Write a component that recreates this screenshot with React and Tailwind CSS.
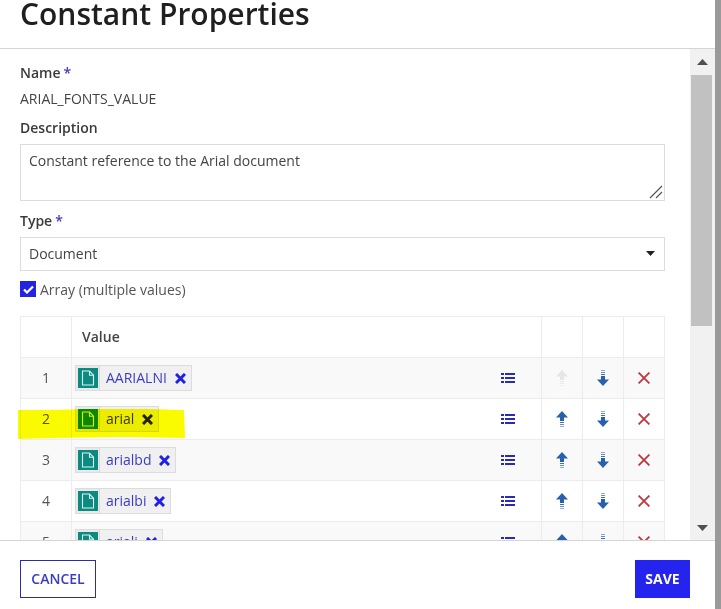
function DocIcon() {
  return (
    <span className="flex h-[24px] w-[24px] items-center justify-center border-r border-[#d8d8d8] bg-[#e9e9e9]">
      <span className="flex h-[20px] w-[20px] items-center justify-center bg-[#0a8a80]">
        <svg width="14" height="16" viewBox="0 0 14 16" fill="none" stroke="#dff5f2" strokeWidth="1.1">
          <path d="M1.5 1h7l4 4.2V15h-11z" />
          <path d="M8.5 1v4.2h4" />
        </svg>
      </span>
    </span>
  );
}

function BoldX({ size = 11, color = "#2222dd" }) {
  return (
    <svg width={size} height={size} viewBox="0 0 11 11" fill="none" stroke={color} strokeWidth="3">
      <path d="M1 1l9 9M10 1l-9 9" />
    </svg>
  );
}

function Chip({ label }) {
  return (
    <div className="flex h-[26px] w-fit items-center border border-[#dcdcdc] bg-[#f0f0f0]">
      <DocIcon />
      <span className="mb-[2px] ml-[6px] text-[14px] text-[#3c3cc4]">{label}</span>
      <span className="ml-[8px] mr-[5px] flex">
        <BoldX />
      </span>
    </div>
  );
}

function ListIcon() {
  return (
    <svg width="14" height="12" viewBox="0 0 14 12" fill="#2a2ab8">
      <rect x="0" y="1" width="3" height="2" />
      <rect x="4" y="1" width="10" height="2" />
      <rect x="0" y="5" width="3" height="2" />
      <rect x="4" y="5" width="10" height="2" />
      <rect x="0" y="9" width="3" height="2" />
      <rect x="4" y="9" width="10" height="2" />
    </svg>
  );
}

function UpArrow({ off }) {
  const c = off ? "#e6e6e6" : "#2860ac";
  return (
    <svg width="12" height="16" viewBox="0 0 12 16" fill={c}>
      <path d="M6 0l6 6.5H8V10H4V6.5H0z" />
      <rect x="4" y="11" width="4" height="1" opacity="0.9" />
      <rect x="4" y="13" width="4" height="1" opacity="0.7" />
      <rect x="4" y="15" width="4" height="1" opacity="0.5" />
    </svg>
  );
}

function DownArrow() {
  return (
    <svg width="12" height="16" viewBox="0 0 12 16" fill="#2860ac">
      <rect x="4" y="0" width="4" height="1" opacity="0.5" />
      <rect x="4" y="2" width="4" height="1" opacity="0.7" />
      <rect x="4" y="4" width="4" height="1" opacity="0.9" />
      <path d="M4 6h4v3.5h4L6 16 0 9.5h4z" />
    </svg>
  );
}

function RedX() {
  return (
    <svg width="12" height="12" viewBox="0 0 12 12" fill="none" stroke="#c0363c" strokeWidth="1.8">
      <path d="M0.6 0.6l10.8 10.8M11.4 0.6L0.6 11.4" />
    </svg>
  );
}

function Row({ n, label, striped, noUp }) {
  const cell = "flex items-center justify-center border-l border-[#ececec] pr-[1px]";
  return (
    <div className={`grid h-[41px] shrink-0 grid-cols-[50px_470px_41px_41px_41px] border-b border-[#ececec] ${striped ? "bg-[#f9f9f9]" : "bg-white"}`}>
      <div className="flex items-center justify-center pb-[2px] text-[14px] text-[#555555]">{n}</div>
      <div className="flex items-center justify-between border-l border-[#ececec] pl-[3px] pr-[26px]">
        <Chip label={label} />
        <ListIcon />
      </div>
      <div className={cell}><UpArrow off={noUp} /></div>
      <div className={cell}><DownArrow /></div>
      <div className={cell}><RedX /></div>
    </div>
  );
}

function Req({ children }) {
  return (
    <div className="flex h-[20px] items-center text-[14px] font-semibold text-[#3a3a3a]">
      {children}
      <span className="ml-[3px] text-[#3c3cc4]">*</span>
    </div>
  );
}

export default function App() {
  return (
    <div className="relative flex h-[609px] w-[721px] overflow-hidden bg-white font-['Open_Sans',sans-serif]">
      <div className="flex h-full w-[715px] flex-col">
        <div className="h-[49px] shrink-0 overflow-hidden border-b border-[#d4d4d4] pl-[20px]">
          <h1 className="mt-[-5px] text-[30px] font-semibold leading-[38px] text-[#1f1f1f]">Constant Properties</h1>
        </div>

        <div className="flex h-[491px] shrink-0 overflow-hidden">
          <div className="w-[690px] shrink-0 overflow-hidden pl-[20px] pr-[25px]">
            <div className="mt-[13px]"><Req>Name</Req></div>
            <div className="mt-[7px] text-[14px] leading-[20px] text-[#444444]">ARIAL_FONTS_VALUE</div>
            <div className="mt-[8px] flex h-[20px] items-center text-[14px] font-semibold text-[#3a3a3a]">Description</div>
            <div className="relative mt-[7px] h-[57px] border border-[#dcdcdc] px-[8px] pt-[6px] text-[14px] leading-[20px] text-[#444444]">
              Constant reference to the Arial document
              <svg className="absolute bottom-[1px] right-[1px]" width="14" height="14" viewBox="0 0 14 14" stroke="#555555" strokeWidth="1.2" fill="none">
                <path d="M1 13L13 1M7 13l6-6" />
              </svg>
            </div>
            <div className="mt-[9px]"><Req>Type</Req></div>
            <div className="mt-[7px] flex h-[34px] items-center justify-between border border-[#dcdcdc] pb-[1px] pl-[8px] pr-[9px] text-[14px] text-[#444444]">
              Document
              <svg width="9" height="5" viewBox="0 0 9 5" fill="#222222"><path d="M0 0h9L4.5 5z" /></svg>
            </div>
            <div className="mt-[10px] flex h-[16px] items-center text-[14px] text-[#555555]">
              <span className="mr-[4px] flex h-[16px] w-[16px] items-center justify-center bg-[#2424e0]">
                <svg width="11" height="9" viewBox="0 0 11 9" fill="none" stroke="#ffffff" strokeWidth="2.2"><path d="M1 4.5l3 3 6-6" /></svg>
              </span>
              Array (multiple values)
            </div>

            <div className="mt-[19px] flex h-[240px] flex-col border-x border-t border-[#ececec]">
              <div className="grid h-[41px] shrink-0 grid-cols-[50px_470px_41px_41px_41px] border-b border-[#ececec]">
                <div />
                <div className="flex items-center border-l border-[#ececec] pb-[2px] pl-[10px] text-[14px] font-semibold text-[#444444]">Value</div>
                <div className="border-l border-[#ececec]" />
                <div className="border-l border-[#ececec]" />
                <div className="border-l border-[#ececec]" />
              </div>
              <Row n="1" label="AARIALNI" striped noUp />
              <Row n="2" label="arial" />
              <Row n="3" label="arialbd" striped />
              <Row n="4" label="arialbi" />
              <Row n="5" label="ariali" striped />
            </div>
          </div>

          <div className="flex w-[25px] shrink-0 flex-col bg-[#f1f1f1]">
            <div className="flex h-[26px] items-center justify-center">
              <svg width="11" height="6" viewBox="0 0 11 6" fill="#505050"><path d="M5.5 0L11 6H0z" /></svg>
            </div>
            <div className="ml-[1px] h-[251px] w-[21px] bg-[#c1c1c1]" />
            <div className="flex flex-1 items-end justify-center pb-[9px]">
              <svg width="11" height="6" viewBox="0 0 11 6" fill="#505050"><path d="M0 0h11L5.5 6z" /></svg>
            </div>
          </div>
        </div>

        <div className="flex flex-1 items-center justify-between border-t border-[#d4d4d4] bg-white pl-[20px] pr-[25px] pt-[8px]">
          <button className="flex h-[38px] w-[76px] items-center justify-center border border-[#2c2ca8] pb-[2px] text-[14px] font-semibold text-[#3c3cc4]">CANCEL</button>
          <button className="flex h-[38px] w-[55px] items-center justify-center bg-[#2424ee] pb-[2px] text-[14px] font-bold text-white">SAVE</button>
        </div>
      </div>
      <div className="h-full w-[6px] bg-[#9a9a9a]" />

      <svg className="absolute left-[16px] top-[407px] mix-blend-multiply" width="170" height="32" viewBox="0 0 170 32" fill="#fbfb00">
        <path d="M2 3h30l40 -1 60 0 36 1 1 28-60-1-70 1-37 1z" />
      </svg>
    </div>
  );
}
